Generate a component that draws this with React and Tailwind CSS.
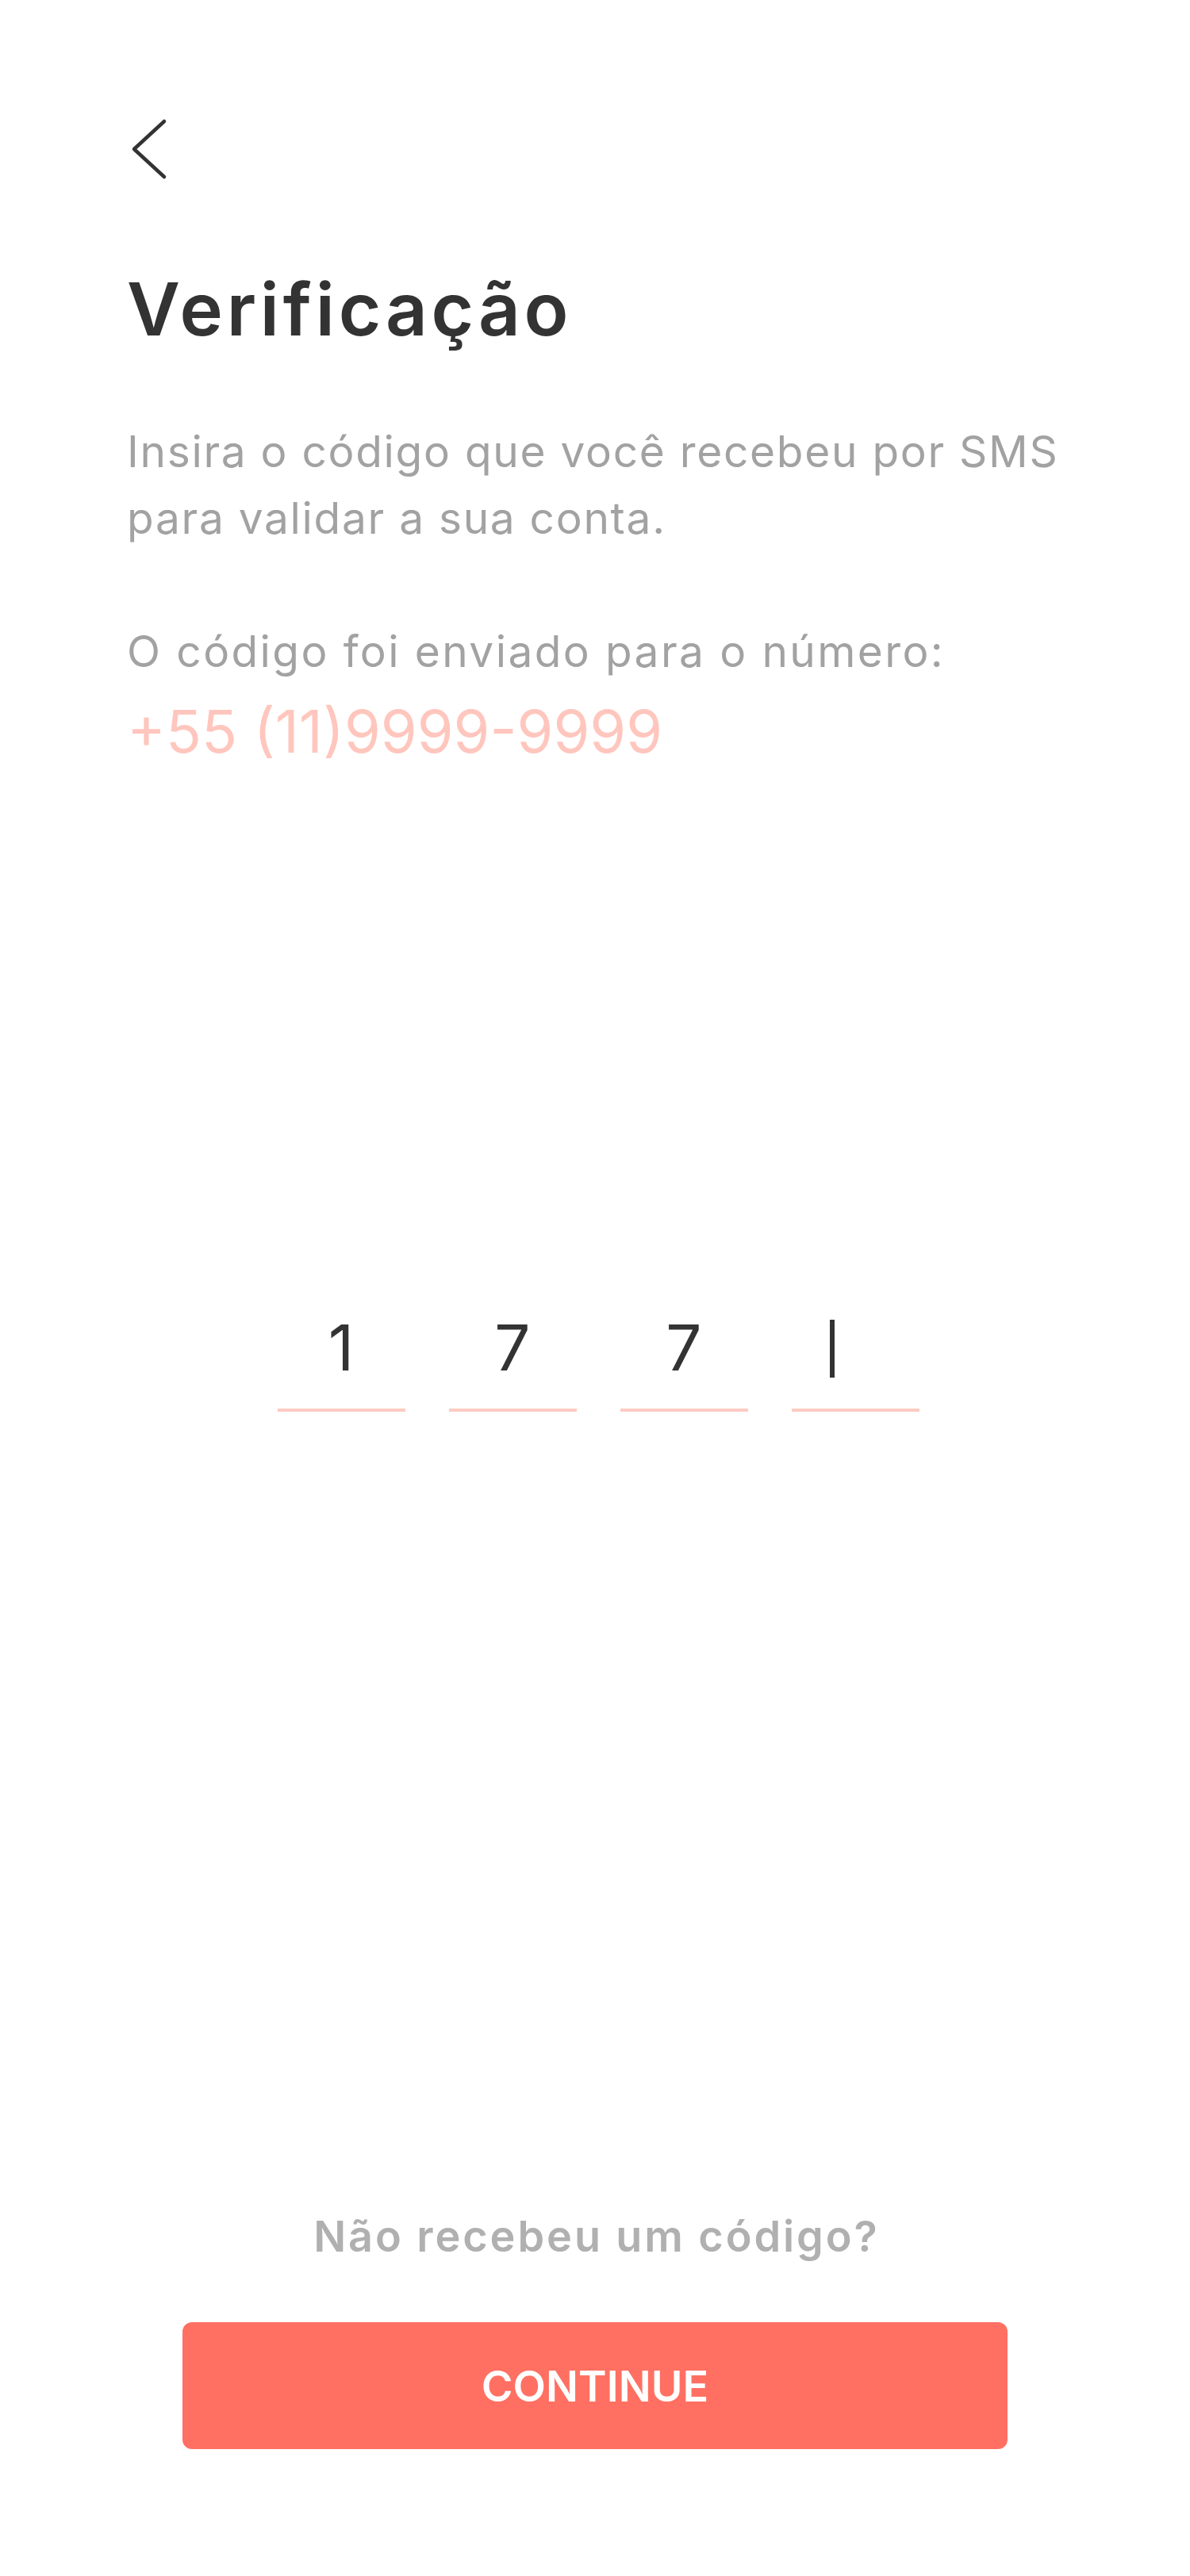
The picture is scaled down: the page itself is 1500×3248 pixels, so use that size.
import React from "react";

export default function App() {
  const digits = ["1", "7", "7", ""];
  return (
    <div className="w-full min-h-screen bg-white font-['Inter',sans-serif]">
      <div className="pl-[160px] pt-[148px]">
        <svg width="48" height="80" viewBox="0 0 48 80" className="block ml-[4px]">
          <polyline points="43,5 5,40 43,75" fill="none" stroke="#333333" strokeWidth="4.5" strokeLinecap="round" strokeLinejoin="round" />
        </svg>
        <h1 className="mt-[106px] text-[92px] leading-[112px] font-semibold text-[#333333] whitespace-nowrap tracking-[4.8px]">
          Verificação
        </h1>
        <p className="mt-[81px] text-[55px] leading-[84px] text-[#a2a2a2] whitespace-nowrap tracking-[1.7px]">
          Insira o código que você recebeu por SMS
          <br />
          para validar a sua conta.
        </p>
        <p className="mt-[84px] text-[55px] leading-[84px] text-[#a2a2a2] whitespace-nowrap tracking-[2.4px]">
          O código foi enviado para o número:
        </p>
        <p className="mt-[14px] text-[74px] leading-[90px] text-[#ffc6be] whitespace-nowrap">
          +55 (11)9999-9999
        </p>
      </div>

      <div className="mt-[682px] flex justify-center gap-[55px] pl-[8px]">
        {digits.map((d, i) => (
          <div key={i} className="w-[161px] flex flex-col">
            {d ? (
              <div className="h-[100px] text-center text-[80px] leading-[100px] text-[#333333]">{d}</div>
            ) : (
              <div className="h-[100px] pl-[48px] pt-[15px]">
                <div className="w-[6px] h-[73px] bg-[#333333]" />
              </div>
            )}
            <div className="mt-[27px] h-[4px] bg-[#fdcbc2]" />
          </div>
        ))}
      </div>

      <p className="mt-[1005px] text-center text-[54px] leading-[70px] font-semibold text-[#b0b0b0] pl-[4px] tracking-[2.9px]">
        Não recebeu um código?
      </p>
      <div className="mt-[73px] pb-[160px] flex justify-center">
        <button className="w-[1040px] h-[160px] rounded-[12px] bg-[#ff7062] flex items-center justify-center text-[54px] font-semibold text-white">
          CONTINUE
        </button>
      </div>
    </div>
  );
}
